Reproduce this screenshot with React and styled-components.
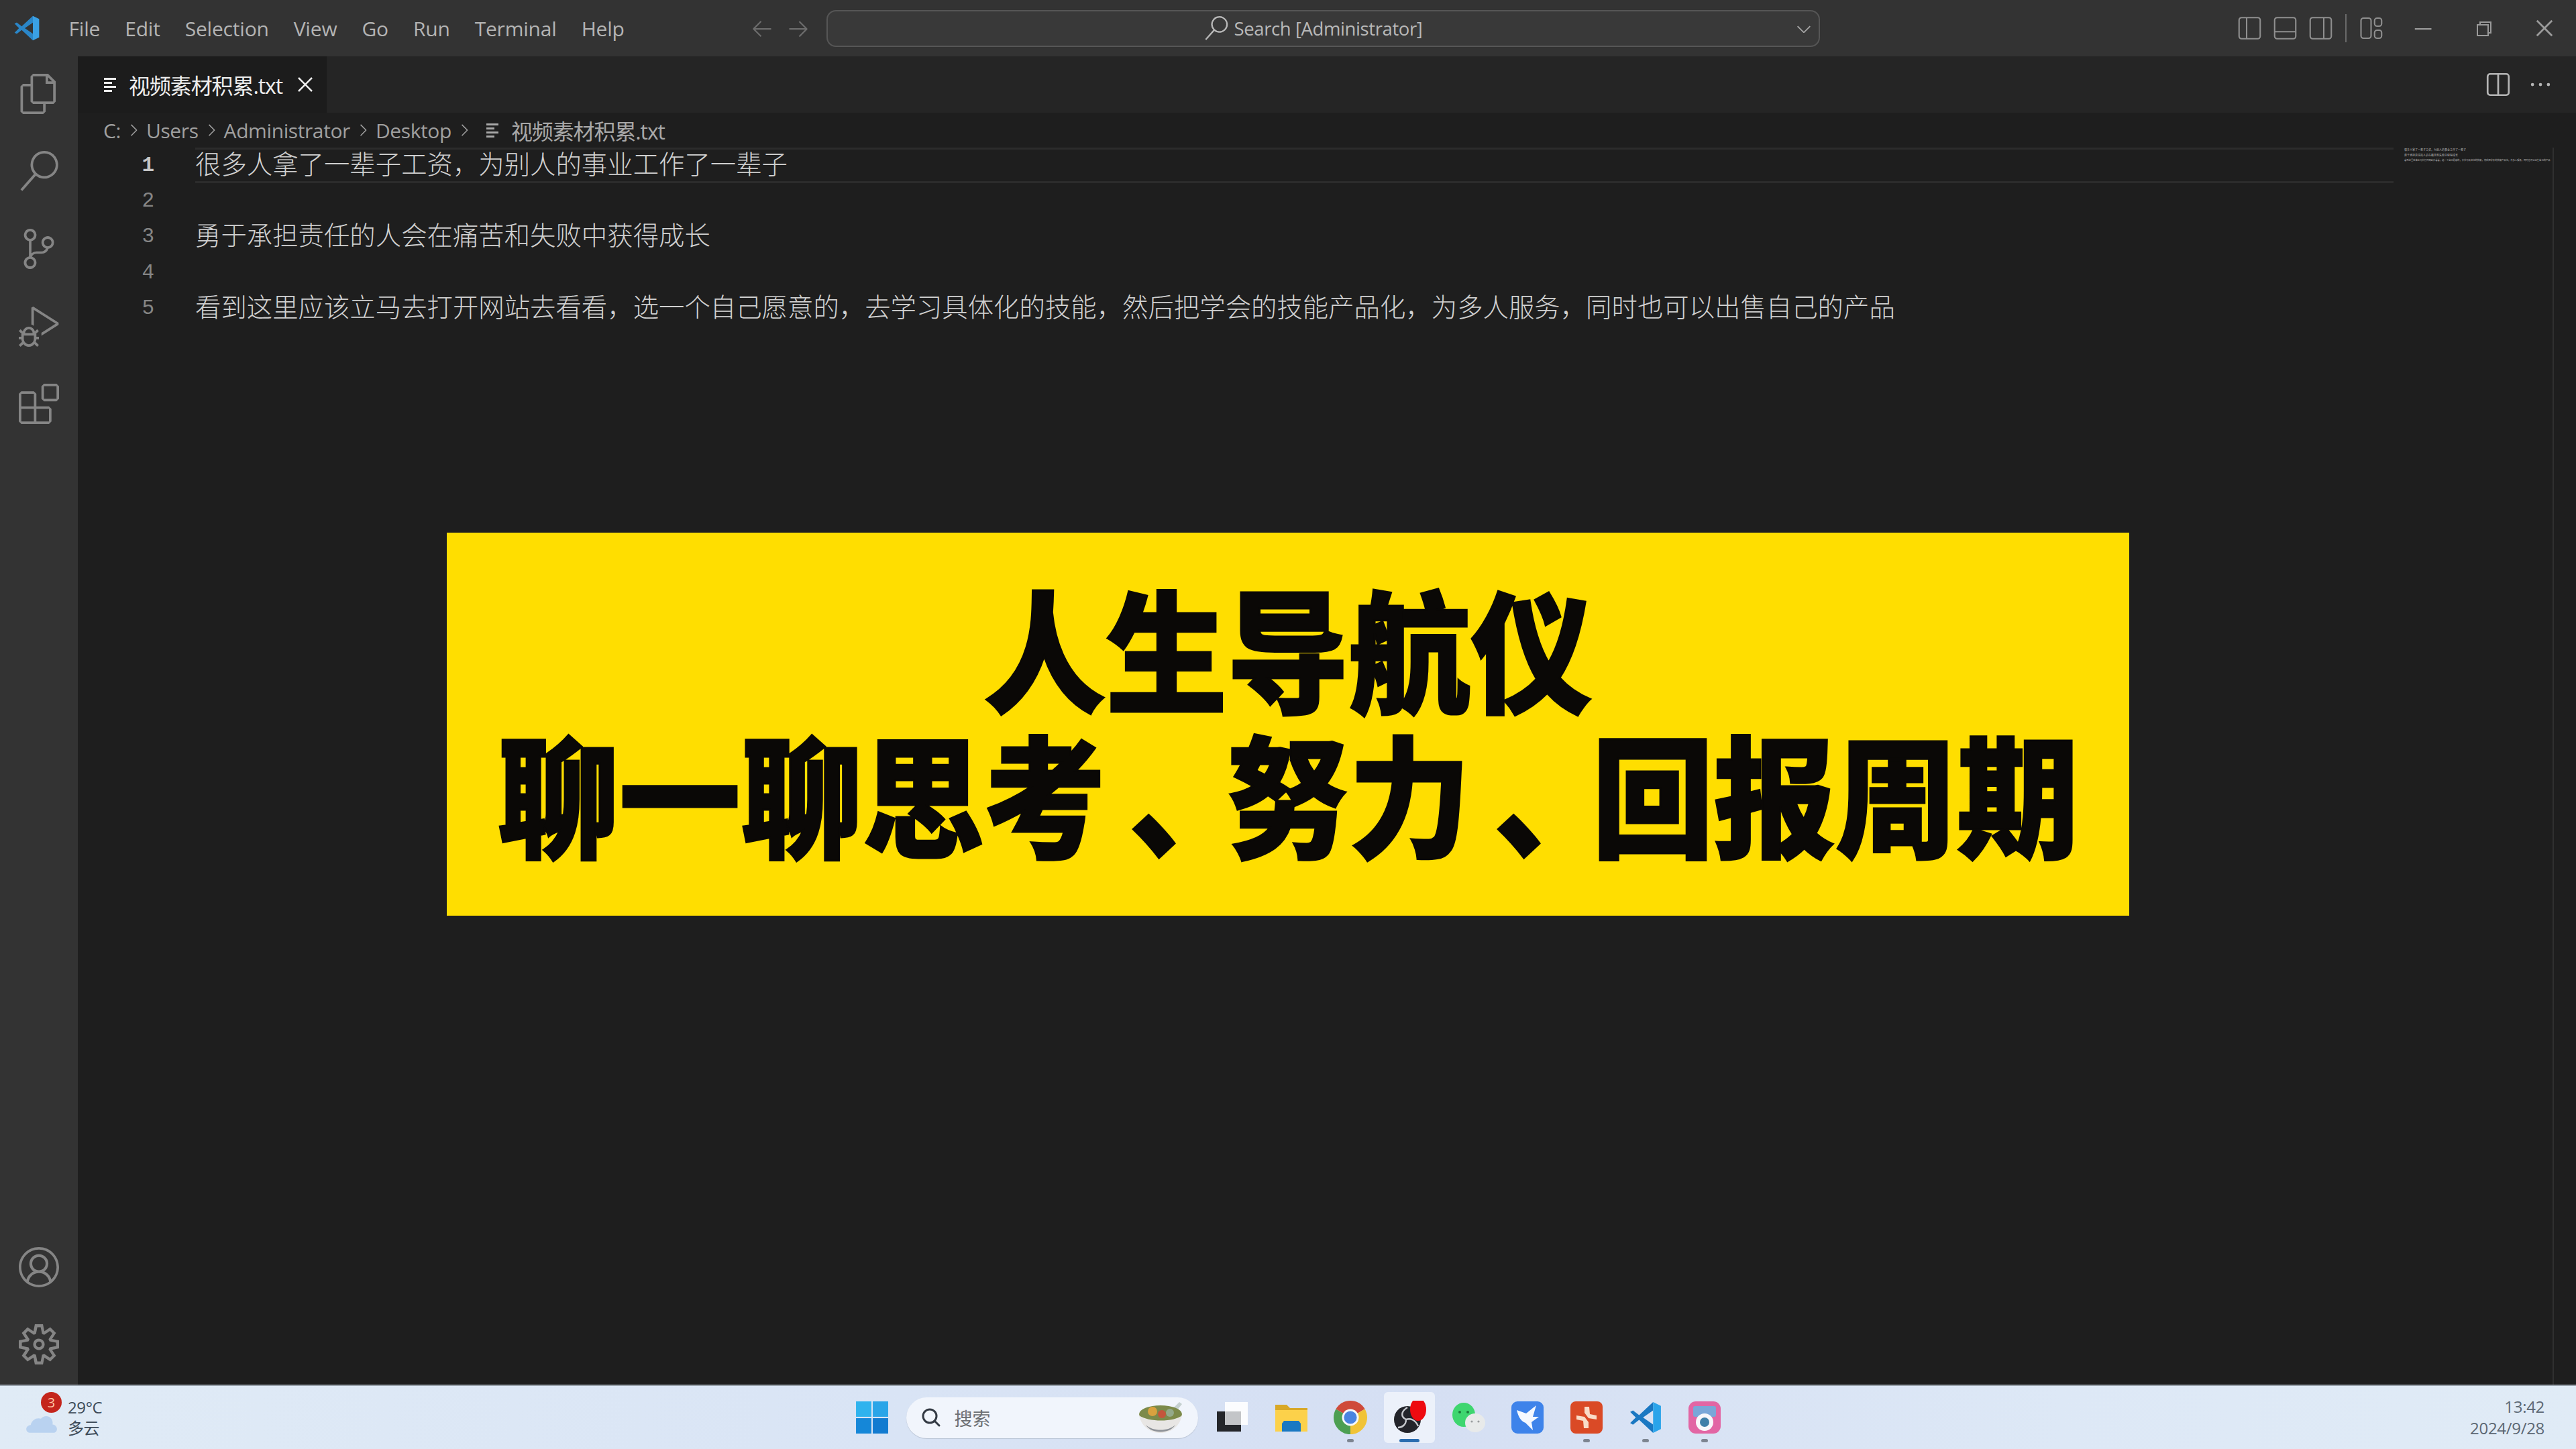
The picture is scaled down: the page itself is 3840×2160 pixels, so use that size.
import React from 'react'
import styled, { createGlobalStyle } from 'styled-components'
import {
  VscFiles,
  VscSearch,
  VscSourceControl,
  VscDebugAlt,
  VscExtensions,
  VscAccount,
  VscSettingsGear,
  VscArrowLeft,
  VscArrowRight,
  VscChevronDown,
  VscChevronRight,
  VscClose,
  VscChromeMinimize,
  VscChromeRestore,
  VscChromeClose,
  VscEllipsis,
} from 'react-icons/vsc'

const UI_FONT = `"Open Sans", "Noto Sans CJK SC", sans-serif`
const CJK_FONT = `"Noto Sans CJK SC", sans-serif`

const GlobalStyle = createGlobalStyle`
  html, body {
    margin: 0;
    padding: 0;
    background: #1e1e1e;
  }
`

const Page = styled.div`
  position: relative;
  width: 3840px;
  height: 2160px;
  display: flex;
  flex-direction: column;
  overflow: hidden;
  font-family: ${UI_FONT};
`

const TitleBar = styled.header`
  height: 84px;
  flex: none;
  background: #333333;
  display: grid;
  grid-template-columns: 1110px 122px 1481px 1fr;
  align-items: center;
`

const MenuBar = styled.nav`
  display: flex;
  align-items: center;
  padding-left: 20px;
`

const MenuList = styled.div`
  display: flex;
  margin-left: 24px;
`

const MenuItem = styled.span`
  padding: 0 18.5px;
  font-size: 30px;
  letter-spacing: -0.2px;
  color: #b4b4b4;
`

const NavArrows = styled.div`
  display: flex;
  gap: 18px;
  padding-left: 8px;
  color: #6c6c6c;
  font-size: 36px;

  svg {
    display: block;
  }
`

const CommandCenter = styled.div`
  position: relative;
  height: 55px;
  box-sizing: border-box;
  border: 2px solid #565656;
  border-radius: 14px;
  background: #393939;
  padding-right: 30px;
  display: flex;
  align-items: center;
  justify-content: center;
  gap: 9px;
  color: #b8b8b8;
  font-size: 27.5px;
  letter-spacing: -0.4px;
`

const CommandChevron = styled(VscChevronDown)`
  position: absolute;
  right: 6px;
  top: 10px;
  font-size: 32px;
  color: #aaaaaa;
`

const WindowTools = styled.div`
  display: flex;
  align-items: center;
  height: 84px;
  padding-left: 622px;
  color: #8f8f8f;
`

const LayoutIcon = styled.svg`
  width: 37px;
  height: 36px;
  margin-right: 16px;
  fill: none;
  stroke: currentColor;
  stroke-width: 1.4;
`

const ToolDivider = styled.i`
  width: 2px;
  height: 42px;
  background: #6a6a6a;
  margin: 0 18px 0 2px;
`

const WindowButtons = styled.div`
  display: flex;
  align-items: center;
  margin-left: -4px;
`

const WindowButton = styled.span`
  display: flex;
  justify-content: center;
  width: 91px;
  font-size: ${(p) => p.$size}px;
  color: #9a9a9a;
`

const Body = styled.div`
  flex: 1;
  min-height: 0;
  display: flex;
`

const ActivityBar = styled.aside`
  width: 116px;
  flex: none;
  background: #333333;
  display: flex;
  flex-direction: column;
  padding-bottom: 2px;
  box-sizing: border-box;
  color: #858585;
`

const ActivityItem = styled.div`
  height: 115.6px;
  flex: none;
  display: flex;
  align-items: center;
  justify-content: center;
  font-size: 60px;
  margin-top: ${(p) => (p.$push ? 'auto' : 0)};

  &:first-child {
    margin-top: -2px;
  }
`

const EditorColumn = styled.main`
  flex: 1;
  min-width: 0;
  display: flex;
  flex-direction: column;
  background: #1e1e1e;
`

const TabStrip = styled.div`
  height: 84px;
  flex: none;
  background: #252525;
  display: flex;
  justify-content: space-between;
  align-items: center;
`

const Tab = styled.div`
  width: 371px;
  height: 84px;
  box-sizing: border-box;
  background: #1c1c1c;
  display: flex;
  align-items: center;
  padding-left: 39px;
  color: #ededed;
`

const FileGlyph = styled.svg`
  width: 20px;
  height: 22px;
  flex: none;
  fill: currentColor;
`

const FileName = styled.span`
  font-size: 32px;
  letter-spacing: -1.1px;
  margin-left: 17px;
  white-space: nowrap;
`

const TabClose = styled(VscClose)`
  margin-left: 14px;
  font-size: 40px;
  flex: none;
`

const EditorActions = styled.div`
  display: flex;
  align-items: center;
  gap: 26px;
  padding-right: 34px;
  color: #b5b5b5;
`

const SplitIcon = styled.svg`
  width: 36px;
  height: 36px;
  fill: none;
  stroke: currentColor;
  stroke-width: 1.8;
`

const MoreIcon = styled(VscEllipsis)`
  font-size: 38px;
`

const Breadcrumbs = styled.div`
  height: 52px;
  flex: none;
  display: flex;
  align-items: center;
  padding-left: 38px;
  color: #a0a0a0;
  font-size: 30px;
  letter-spacing: -0.4px;
`

const Crumb = styled.span`
  white-space: nowrap;
`

const CrumbSeparator = styled(VscChevronRight)`
  font-size: 28px;
  margin: 0 5px;
  flex: none;
`

const CrumbFile = styled.span`
  display: flex;
  align-items: center;
  margin-left: 14px;
  color: #a8a8a8;
`

const EditorBody = styled.div`
  flex: 1;
  min-height: 0;
  display: flex;
`

const Lines = styled.div`
  width: 3452px;
  flex: none;
`

const Line = styled.div`
  height: 53.2px;
  display: flex;
  align-items: center;
`

const LineNumber = styled.span`
  width: 114px;
  flex: none;
  text-align: right;
  font-family: "Liberation Mono", monospace;
  font-size: 31px;
  font-weight: ${(p) => (p.$active ? 700 : 400)};
  color: ${(p) => (p.$active ? '#c6c6c6' : '#858585')};
`

const LineText = styled.span`
  margin-left: 61px;
  flex: 1;
  height: 100%;
  box-sizing: border-box;
  padding-bottom: 9px;
  display: flex;
  align-items: center;
  font-family: ${CJK_FONT};
  font-weight: 300;
  font-size: 38.4px;
  color: #d0d0d0;
  white-space: nowrap;
  border-top: ${(p) => (p.$active ? '3px solid #2c2c2c' : '0')};
  border-bottom: ${(p) => (p.$active ? '3px solid #2c2c2c' : '0')};
`

const Minimap = styled.div`
  width: 239px;
  flex: none;
  padding: 0 0 0 16px;
  box-sizing: border-box;
  border-right: 2px solid #303030;
  font-family: ${CJK_FONT};
  line-height: 7.5px;
  color: #bdbdbd;
  white-space: nowrap;
`

const MinimapLine = styled.div`
  font-size: ${(p) => p.$size}px;
`

const Banner = styled.section`
  position: absolute;
  left: 666px;
  top: 794px;
  width: 2508px;
  height: 571px;
  box-sizing: border-box;
  padding-bottom: 20px;
  background: #ffde00;
  display: flex;
  flex-direction: column;
  align-items: center;
  justify-content: center;
  font-family: ${CJK_FONT};
  font-weight: 900;
  font-size: 196px;
  line-height: 216px;
  color: #0a0806;
  -webkit-text-stroke: 3px #0a0806;
`

const BannerLine = styled.div`
  white-space: nowrap;
  transform: scaleX(0.925);
`

const BannerComma = styled.span`
  display: inline-block;
  transform: translateX(38px);
`

const Taskbar = styled.footer`
  height: 96px;
  flex: none;
  box-sizing: border-box;
  border-top: 2px solid #9aa3ad;
  background: linear-gradient(90deg, #e0ebf6 0%, #d9e4f5 35%, #d5dff3 55%, #dde8f6 80%, #e0ebf6 100%);
  display: grid;
  grid-template-columns: 1fr auto 1fr;
  align-items: center;
`

const Weather = styled.div`
  position: relative;
  display: flex;
  align-items: center;
  padding-left: 38px;
`

const CloudIcon = styled.svg`
  width: 48px;
  height: 33px;
  margin-top: 14px;
  flex: none;
`

const WeatherBadge = styled.span`
  position: absolute;
  left: 61px;
  top: -7px;
  width: 31px;
  height: 31px;
  border-radius: 50%;
  background: #c4251c;
  color: #ffc9a6;
  font-size: 20px;
  line-height: 31px;
  text-align: center;
`

const WeatherText = styled.div`
  margin-left: 15px;
  font-size: 24px;
  line-height: 31px;
  color: #3d4a58;
  letter-spacing: -0.4px;
`

const CenterIcons = styled.div`
  display: flex;
  align-items: center;
`

const TaskItem = styled.div`
  position: relative;
  width: 88px;
  height: 76px;
  display: flex;
  align-items: center;
  justify-content: center;

  &::before {
    content: '';
    display: ${(p) => (p.$active ? 'block' : 'none')};
    position: absolute;
    inset: 0 6px;
    border-radius: 6px;
    background: #ecf1fa;
  }

  &::after {
    content: '';
    display: ${(p) => (p.$dot || p.$active ? 'block' : 'none')};
    position: absolute;
    left: 50%;
    bottom: 1px;
    width: ${(p) => (p.$active ? 30 : 10)}px;
    height: 5px;
    border-radius: 3px;
    transform: translateX(-50%);
    background: ${(p) => (p.$active ? '#2a6db0' : '#7d8591')};
  }
`

const AppIcon = styled.svg`
  position: relative;
  width: 50px;
  height: 50px;
  display: block;
`

const TitleLogo = styled.svg`
  width: 40px;
  height: 40px;
  flex: none;
`

const SearchPill = styled.div`
  width: 435px;
  height: 61px;
  margin: 0 7px;
  box-sizing: border-box;
  padding: 0 20px 0 21px;
  border-radius: 31px;
  background: #f1f5fc;
  box-shadow: 0 1px 1px #b9c3d3;
  display: flex;
  align-items: center;
  color: #6d6f73;
  font-family: ${CJK_FONT};
  font-size: 27px;
`

const PillLens = styled.svg`
  width: 32px;
  height: 32px;
  flex: none;
  fill: none;
  stroke: #333a44;
  stroke-width: 3;
  stroke-linecap: round;
`

const PillLabel = styled.span`
  margin-left: 19px;
  flex: 1;
`

const BowlIcon = styled.svg`
  width: 72px;
  height: 50px;
  flex: none;
`

const Clock = styled.div`
  justify-self: end;
  padding-right: 47px;
  text-align: right;
  font-size: 24px;
  line-height: 32px;
  letter-spacing: -0.3px;
  color: #5d6874;
`

const FileLines = () => (
  <FileGlyph viewBox="0 0 20 22">
    <rect x="0" y="1" width="18" height="3" />
    <rect x="0" y="7" width="12" height="3" />
    <rect x="0" y="13" width="18" height="3" />
    <rect x="0" y="19" width="12" height="3" />
  </FileGlyph>
)

const VscodeLogo = () => (
  <AppIcon viewBox="0 0 24 24">
    <path d="M17.4 1 L7.4 10.3 L3 6.9 L1 8 L5 12 L1 16 L3 17.1 L7.4 13.7 L17.4 23 V17 L10.2 12 L17.4 7 Z" fill="#1a78c2" />
    <path d="M17.4 1 L23 3.7 V20.3 L17.4 23 Z" fill="#2aa4ea" />
  </AppIcon>
)

const WinLogo = () => (
  <AppIcon viewBox="0 0 48 48">
    <rect x="1" y="1" width="22" height="22" fill="#2fb3ee" />
    <rect x="25" y="1" width="22" height="22" fill="#2aa5e8" />
    <rect x="1" y="25" width="22" height="22" fill="#1587d8" />
    <rect x="25" y="25" width="22" height="22" fill="#127bd0" />
  </AppIcon>
)

const TaskView = () => (
  <AppIcon viewBox="0 0 50 50">
    <rect x="14" y="2" width="34" height="34" fill="#fbfcfe" />
    <rect x="2" y="16" width="36" height="30" fill="#24262a" />
    <rect x="14" y="16" width="24" height="20" fill="#c3c5c8" />
  </AppIcon>
)

const Folder = () => (
  <AppIcon viewBox="0 0 50 50">
    <path d="M1 6 H18 L23 11 H49 V46 H1 Z" fill="#d9a826" />
    <rect x="1" y="14" width="48" height="32" fill="#fcd14a" />
    <path d="M14 30 H36 L39 34 V46 H11 V34 Z" fill="#1a78c2" />
  </AppIcon>
)

const Chrome = () => (
  <AppIcon viewBox="0 0 24 24">
    <path d="M12 12 L1.61 6 A12 12 0 0 1 22.39 6 Z" fill="#cf4a3a" />
    <path d="M12 12 L1.61 6 A12 12 0 0 0 12 24 Z" fill="#4c9f52" />
    <path d="M12 12 L22.39 6 A12 12 0 0 1 12 24 Z" fill="#f0c337" />
    <circle cx="12" cy="12" r="6" fill="#f6f8fb" />
    <circle cx="12" cy="12" r="4.6" fill="#4a84e0" />
  </AppIcon>
)

const Obs = () => (
  <AppIcon viewBox="0 0 50 50">
    <circle cx="22" cy="28" r="20" fill="#23242a" />
    <path d="M22 10 C12 16 12 24 20 28 M38 38 C34 28 26 26 20 28 M8 40 C14 40 20 36 20 28" fill="none" stroke="#c7c9ce" strokeWidth="2.4" />
    <ellipse cx="38" cy="13" rx="12" ry="17" fill="#ee0a10" />
  </AppIcon>
)

const Wechat = () => (
  <AppIcon viewBox="0 0 50 50">
    <ellipse cx="18" cy="21" rx="17" ry="18" fill="#3ed66f" />
    <circle cx="12" cy="17" r="2" fill="#1c7a3c" />
    <circle cx="24" cy="17" r="2" fill="#1c7a3c" />
    <ellipse cx="35" cy="33" rx="15" ry="14" fill="#e8eaea" />
    <circle cx="30" cy="31" r="1.6" fill="#9a9d9f" />
    <circle cx="40" cy="31" r="1.6" fill="#9a9d9f" />
  </AppIcon>
)

const Xunlei = () => (
  <AppIcon viewBox="0 0 50 50">
    <rect x="1" y="1" width="48" height="48" rx="9" fill="#3e83ea" />
    <path d="M9 14 L23 19 L38 7 L33 24 L42 24 L31 32 L33 44 L22 33 C14 30 11 22 9 14 Z" fill="#f4f8ff" />
  </AppIcon>
)

const RedApp = () => (
  <AppIcon viewBox="0 0 50 50">
    <rect x="1" y="1" width="48" height="48" rx="8" fill="#da4a26" />
    <path d="M22 9 L29 9 L30 20 L40 22 L40 28 L28 26 L22 18 Z M28 41 L21 41 L20 30 L10 28 L10 22 L22 24 L28 32 Z" fill="#f9dcc8" />
  </AppIcon>
)

const PinkApp = () => (
  <AppIcon viewBox="0 0 50 50">
    <rect x="1" y="1" width="48" height="48" rx="11" fill="#e266a4" />
    <rect x="8" y="8" width="34" height="16" rx="3" fill="#7aa7d8" />
    <circle cx="25" cy="32" r="13" fill="#f8f8fb" />
    <circle cx="25" cy="32" r="7" fill="#3e7fa8" />
  </AppIcon>
)

const Bowl = () => (
  <BowlIcon viewBox="0 0 72 50">
    <path d="M50 16 L64 2 L68 5 L56 20 Z" fill="#c5d0cf" />
    <ellipse cx="36" cy="20" rx="32" ry="13" fill="#7c8a4a" />
    <circle cx="24" cy="16" r="7" fill="#d9a23f" />
    <circle cx="38" cy="20" r="6" fill="#c4553c" />
    <circle cx="50" cy="18" r="6" fill="#94a98a" />
    <path d="M4 22 C8 40 22 48 36 48 C50 48 64 40 68 22 C56 32 18 32 4 22 Z" fill="#e8e6e4" />
    <path d="M14 36 C24 46 48 46 58 36 C50 50 22 50 14 36 Z" fill="#8e9298" />
  </BowlIcon>
)

const Cloud = () => (
  <CloudIcon viewBox="0 0 50 34">
    <path d="M8 33 C-1 33 -1 22 8 21 C10 12 18 9 24 11 C31 3 44 8 42 20 C51 21 51 33 43 33 Z" fill="#b9d2f0" />
  </CloudIcon>
)

const MENU = ['File', 'Edit', 'Selection', 'View', 'Go', 'Run', 'Terminal', 'Help']
const FILE = '视频素材积累.txt'
const TEXT = [
  '很多人拿了一辈子工资，为别人的事业工作了一辈子',
  '',
  '勇于承担责任的人会在痛苦和失败中获得成长',
  '',
  '看到这里应该立马去打开网站去看看，选一个自己愿意的，去学习具体化的技能，然后把学会的技能产品化，为多人服务，同时也可以出售自己的产品',
]

export default function App() {
  return (
    <Page>
      <GlobalStyle />
      <TitleBar>
        <MenuBar>
          <TitleLogo viewBox="0 0 24 24">
            <path d="M17.4 1 L7.4 10.3 L3 6.9 L1 8 L5 12 L1 16 L3 17.1 L7.4 13.7 L17.4 23 V17 L10.2 12 L17.4 7 Z" fill="#2a86c8" />
            <path d="M17.4 1 L23 3.7 V20.3 L17.4 23 Z" fill="#3aa0e4" />
          </TitleLogo>
          <MenuList>
            {MENU.map((m) => (
              <MenuItem key={m}>{m}</MenuItem>
            ))}
          </MenuList>
        </MenuBar>
        <NavArrows>
          <VscArrowLeft />
          <VscArrowRight />
        </NavArrows>
        <CommandCenter>
          <VscSearch size={36} />
          <span>Search [Administrator]</span>
          <CommandChevron />
        </CommandCenter>
        <WindowTools>
          <LayoutIcon viewBox="0 0 24 24">
            <rect x="1.5" y="1.5" width="21" height="21" rx="2.5" />
            <path d="M9 1.5 V22.5" />
          </LayoutIcon>
          <LayoutIcon viewBox="0 0 24 24">
            <rect x="1.5" y="1.5" width="21" height="21" rx="2.5" />
            <path d="M1.5 15.5 H22.5" />
          </LayoutIcon>
          <LayoutIcon viewBox="0 0 24 24">
            <rect x="1.5" y="1.5" width="21" height="21" rx="2.5" />
            <path d="M15 1.5 V22.5" />
          </LayoutIcon>
          <ToolDivider />
          <LayoutIcon viewBox="0 0 24 24">
            <rect x="2" y="2" width="10" height="20" rx="2.5" />
            <rect x="15.5" y="2" width="7" height="8" rx="2.5" />
            <rect x="15.5" y="14" width="7" height="8" rx="2.5" />
          </LayoutIcon>
          <WindowButtons>
            <WindowButton $size={36}><VscChromeMinimize /></WindowButton>
            <WindowButton $size={32}><VscChromeRestore /></WindowButton>
            <WindowButton $size={36}><VscChromeClose /></WindowButton>
          </WindowButtons>
        </WindowTools>
      </TitleBar>

      <Body>
        <ActivityBar>
          <ActivityItem><VscFiles /></ActivityItem>
          <ActivityItem><VscSearch /></ActivityItem>
          <ActivityItem><VscSourceControl /></ActivityItem>
          <ActivityItem><VscDebugAlt /></ActivityItem>
          <ActivityItem><VscExtensions /></ActivityItem>
          <ActivityItem $push><VscAccount /></ActivityItem>
          <ActivityItem><VscSettingsGear /></ActivityItem>
        </ActivityBar>

        <EditorColumn>
          <TabStrip>
            <Tab>
              <FileLines />
              <FileName>{FILE}</FileName>
              <TabClose />
            </Tab>
            <EditorActions>
              <SplitIcon viewBox="0 0 24 24">
                <rect x="1.5" y="1.5" width="21" height="21" rx="2.5" />
                <path d="M12 1.5 V22.5" />
              </SplitIcon>
              <MoreIcon />
            </EditorActions>
          </TabStrip>

          <Breadcrumbs>
            <Crumb>C:</Crumb>
            <CrumbSeparator />
            <Crumb>Users</Crumb>
            <CrumbSeparator />
            <Crumb>Administrator</Crumb>
            <CrumbSeparator />
            <Crumb>Desktop</Crumb>
            <CrumbSeparator />
            <CrumbFile>
              <FileLines />
              <FileName>{FILE}</FileName>
            </CrumbFile>
          </Breadcrumbs>

          <EditorBody>
            <Lines>
              {TEXT.map((t, i) => (
                <Line key={i}>
                  <LineNumber $active={i === 0}>{i + 1}</LineNumber>
                  <LineText $active={i === 0}>{t}</LineText>
                </Line>
              ))}
            </Lines>
            <Minimap>
              <MinimapLine $size={4}>{TEXT[0]}</MinimapLine>
              <MinimapLine $size={4}>{TEXT[2]}</MinimapLine>
              <MinimapLine $size={3.3}>{TEXT[4]}</MinimapLine>
            </Minimap>
          </EditorBody>
        </EditorColumn>
      </Body>

      <Banner>
        <BannerLine>人生导航仪</BannerLine>
        <BannerLine>
          聊一聊思考<BannerComma>、</BannerComma>努力<BannerComma>、</BannerComma>回报周期
        </BannerLine>
      </Banner>

      <Taskbar>
        <Weather>
          <Cloud />
          <WeatherBadge>3</WeatherBadge>
          <WeatherText>
            <div>29°C</div>
            <div>多云</div>
          </WeatherText>
        </Weather>
        <CenterIcons>
          <TaskItem><WinLogo /></TaskItem>
          <SearchPill>
            <PillLens viewBox="0 0 32 32">
              <circle cx="14" cy="14" r="10" />
              <path d="M21 21 L28 28" />
            </PillLens>
            <PillLabel>搜索</PillLabel>
            <Bowl />
          </SearchPill>
          <TaskItem><TaskView /></TaskItem>
          <TaskItem><Folder /></TaskItem>
          <TaskItem $dot><Chrome /></TaskItem>
          <TaskItem $active><Obs /></TaskItem>
          <TaskItem><Wechat /></TaskItem>
          <TaskItem><Xunlei /></TaskItem>
          <TaskItem $dot><RedApp /></TaskItem>
          <TaskItem $dot><VscodeLogo /></TaskItem>
          <TaskItem $dot><PinkApp /></TaskItem>
        </CenterIcons>
        <Clock>
          <div>13:42</div>
          <div>2024/9/28</div>
        </Clock>
      </Taskbar>
    </Page>
  )
}
